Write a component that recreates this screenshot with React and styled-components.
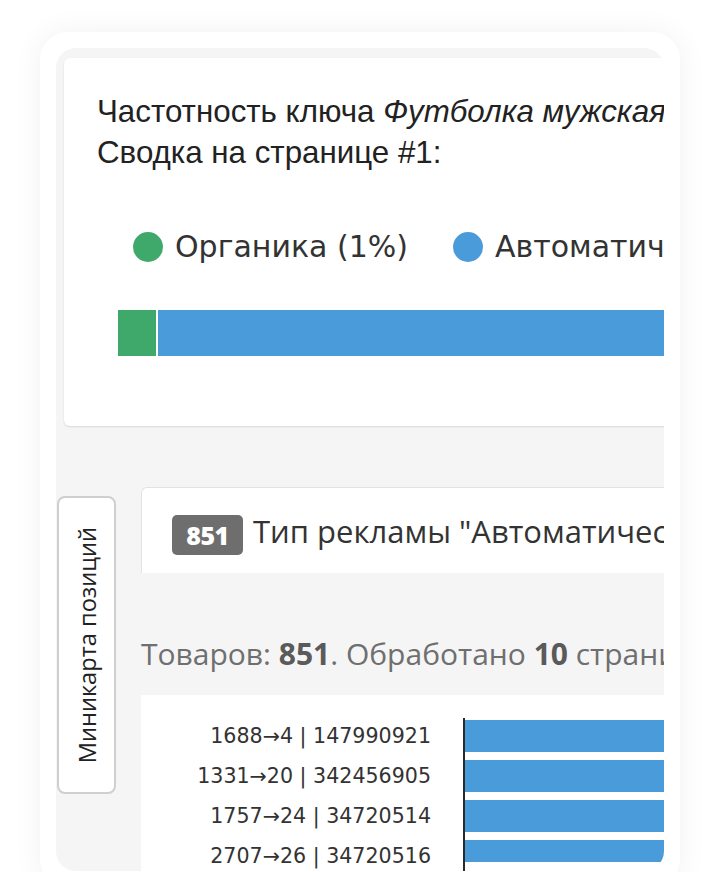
import React from "react";
import styled, { createGlobalStyle } from "styled-components";

const Global = createGlobalStyle`
  html, body { margin: 0; padding: 0; background: #ffffff; }
  body { width: 720px; height: 872px; overflow: hidden; }
  * { box-sizing: border-box; }
`;

const Page = styled.div`
  width: 720px;
  height: 872px;
  overflow: hidden;
  padding: 32px 40px 0;
`;

const Shell = styled.div`
  background: #ffffff;
  border-radius: 28px;
  box-shadow: 0 0 30px rgba(0, 0, 0, 0.06);
  padding: 16px;
  height: 855px;
`;

const Frame = styled.div`
  position: relative;
  height: 823px;
  background: #f5f5f5;
  border-radius: 20px;
  overflow: hidden;
  padding: 10px 0 0 8px;
`;

const Content = styled.div`
  width: 1000px;
  display: flex;
  flex-direction: column;
`;

const TopCard = styled.section`
  background: #ffffff;
  border-radius: 6px;
  box-shadow: 0 1px 2px rgba(0, 0, 0, 0.12);
  height: 368px;
  padding: 33px 0 0 33px;
`;

const Intro = styled.div`
  font-family: "Liberation Sans", Arial, sans-serif;
  font-size: 31.3px;
  line-height: 41px;
  color: #222222;
  white-space: nowrap;
`;

const Legend = styled.div`
  display: flex;
  align-items: center;
  gap: 45px;
  margin: 54px 0 0 36px;
  height: 40px;
`;

const LegendItem = styled.div`
  display: flex;
  align-items: center;
  gap: 12px;
  font-family: "DejaVu Sans", Verdana, sans-serif;
  font-size: 30px;
  line-height: 40px;
  color: #333333;
  white-space: nowrap;
`;

const Dot = styled.span`
  width: 30px;
  height: 30px;
  border-radius: 50%;
  background: ${(p) => p.$color};
  flex: none;
`;

const StackBar = styled.div`
  display: flex;
  gap: 2px;
  height: 46px;
  margin: 43px 0 0 21px;
`;

const Segment = styled.div`
  flex: none;
  height: 100%;
  background: ${(p) => p.$color};
`;

const Section = styled.section`
  margin: 61px 0 0 77px;
  display: flex;
  flex-direction: column;
`;

const Header = styled.header`
  height: 86px;
  background: #ffffff;
  border-top: 1px solid #e2e2e2;
  border-left: 1px solid #e2e2e2;
  border-top-left-radius: 6px;
  display: flex;
  align-items: center;
  gap: 10px;
  padding-left: 30px;
`;

const Badge = styled.span`
  flex: none;
  width: 71px;
  height: 40px;
  margin-top: 8px;
  border-radius: 5px;
  background: #6e6e6e;
  color: #ffffff;
  font-family: "Open Sans", sans-serif;
  font-weight: 800;
  font-size: 25px;
  letter-spacing: -0.5px;
  display: flex;
  align-items: center;
  justify-content: center;
`;

const Title = styled.h2`
  margin: 0;
  font-family: "Open Sans", sans-serif;
  font-weight: 400;
  font-size: 31px;
  color: #333333;
  white-space: nowrap;
`;

const Info = styled.p`
  margin: 63px 0 23px;
  font-family: "Open Sans", sans-serif;
  font-size: 30px;
  line-height: 36px;
  color: #6f6f6f;
  white-space: nowrap;

  b {
    color: #5a5a5a;
    font-weight: 700;
  }
`;

const Chart = styled.div`
  background: #ffffff;
  display: flex;
  padding-top: 23px;
  height: 220px;
`;

const Labels = styled.div`
  width: 322px;
  padding-right: 32px;
  display: flex;
  flex-direction: column;
`;

const Label = styled.div`
  height: 40px;
  padding-top: 2px;
  line-height: 32px;
  text-align: right;
  font-family: "DejaVu Sans", Verdana, sans-serif;
  font-size: 20.6px;
  color: #333333;
  white-space: nowrap;
`;

const Plot = styled.div`
  flex: 1;
  border-left: 2px solid #2a2a2a;
`;

const BarClip = styled.div`
  height: 144px;
  overflow: hidden;
  padding-top: 2px;
  display: flex;
  flex-direction: column;
  gap: 8px;
`;

const Bar = styled.div`
  height: 32px;
  flex: none;
  background: #4a9bd9;
`;

const SideTab = styled.button`
  position: absolute;
  left: 1px;
  top: 448px;
  width: 59px;
  height: 298px;
  background: #ffffff;
  border: 2px solid #cfcfcf;
  border-radius: 8px;
  padding: 0;
  display: flex;
  align-items: center;
  justify-content: center;
`;

const TabText = styled.span`
  writing-mode: vertical-rl;
  transform: rotate(180deg);
  font-family: "Open Sans", sans-serif;
  font-size: 23.6px;
  color: #222222;
  white-space: nowrap;
`;

const rows = [
  "1688→4 | 147990921",
  "1331→20 | 342456905",
  "1757→24 | 34720514",
  "2707→26 | 34720516",
];

export default function App() {
  return (
    <>
      <Global />
      <Page>
        <Shell>
          <Frame>
            <Content>
              <TopCard>
                <Intro>
                  Частотность ключа <i>Футболка мужская</i>
                  <br />
                  Сводка на странице #1:
                </Intro>
                <Legend>
                  <LegendItem>
                    <Dot $color="#3fa86b" />
                    Органика (1%)
                  </LegendItem>
                  <LegendItem>
                    <Dot $color="#4a9bd9" />
                    Автоматическая (99%)
                  </LegendItem>
                </Legend>
                <StackBar>
                  <Segment $color="#3fa86b" style={{ width: 38 }} />
                  <Segment $color="#4a9bd9" style={{ width: 900 }} />
                </StackBar>
              </TopCard>

              <Section>
                <Header>
                  <Badge>851</Badge>
                  <Title>Тип рекламы "Автоматическая"</Title>
                </Header>
                <Info>
                  Товаров: <b>851</b>. Обработано <b>10</b> страниц
                </Info>
                <Chart>
                  <Labels>
                    {rows.map((r) => (
                      <Label key={r}>{r}</Label>
                    ))}
                  </Labels>
                  <Plot>
                    <BarClip>
                      {rows.map((r) => (
                        <Bar key={r} />
                      ))}
                    </BarClip>
                  </Plot>
                </Chart>
              </Section>
            </Content>
            <SideTab>
              <TabText>Миникарта позиций</TabText>
            </SideTab>
          </Frame>
        </Shell>
      </Page>
    </>
  );
}
